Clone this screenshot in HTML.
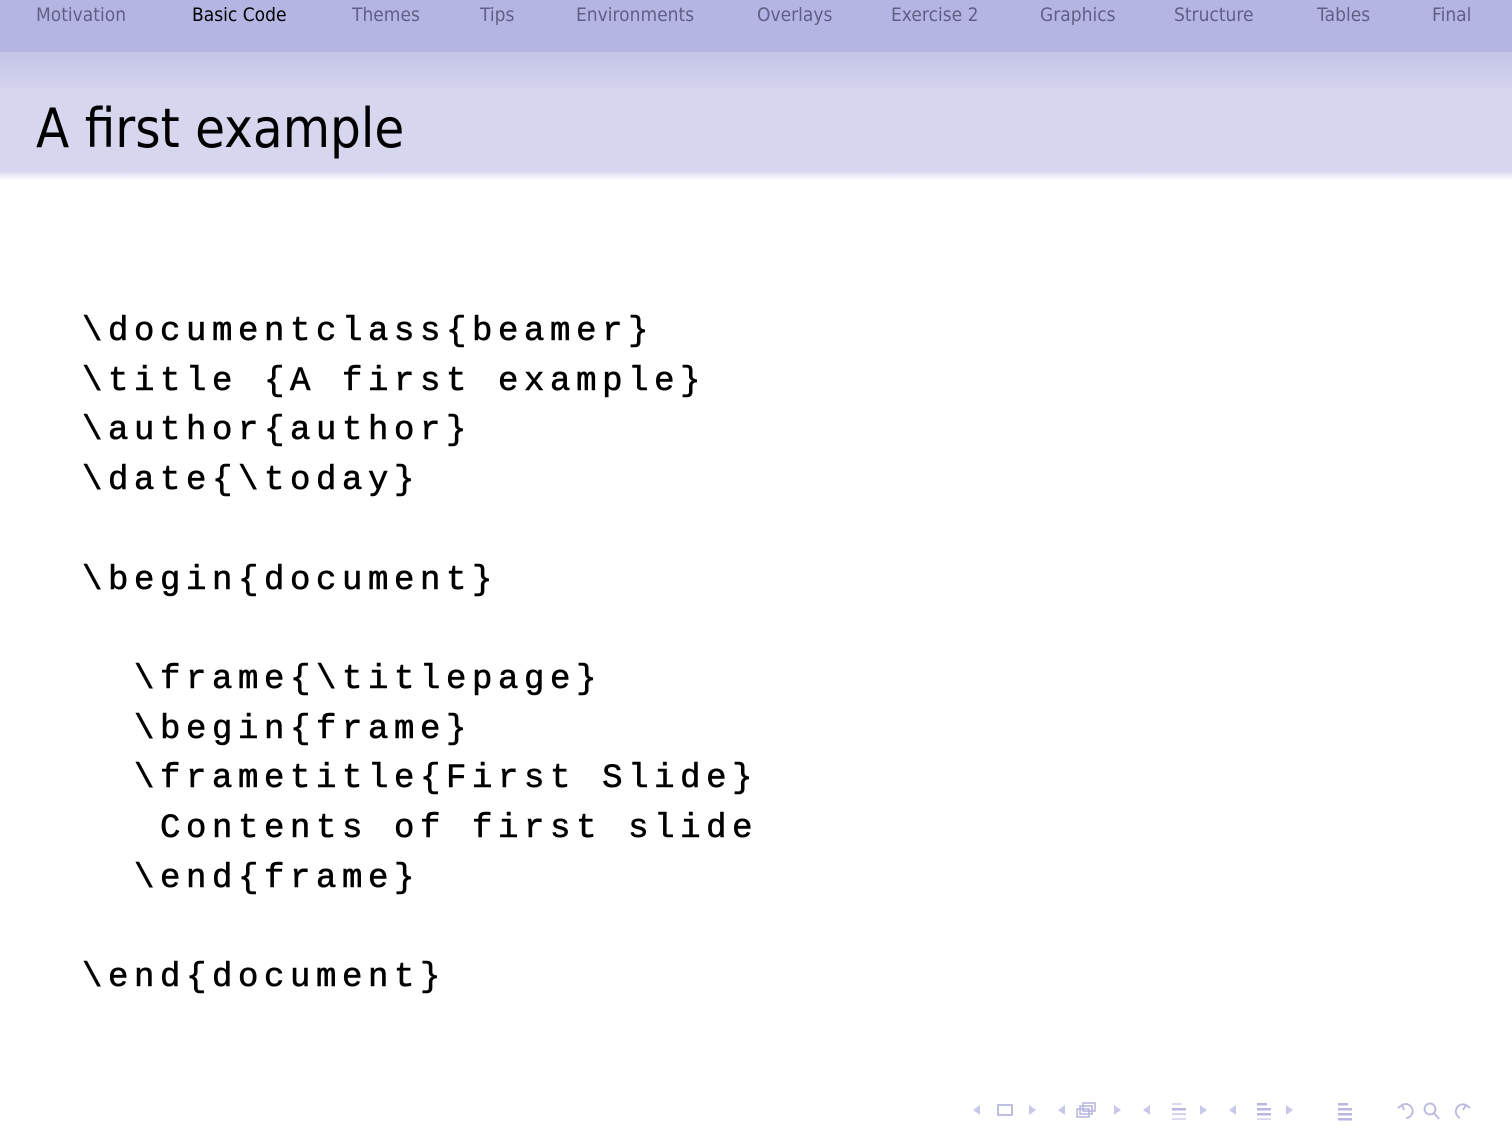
<!DOCTYPE html>
<html><head><meta charset="utf-8"><style>
body{margin:0;width:1512px;height:1134px;background:#fff;position:relative;overflow:hidden;font-family:"DejaVu Sans","Liberation Sans",sans-serif;}
.nav{position:absolute;left:0;top:0;width:1512px;height:52px;background:#b5b5e3;}
.grad{position:absolute;left:0;top:52px;width:1512px;height:36px;background:linear-gradient(#c4c4e8,#d3d3ee);}
.tb{position:absolute;left:0;top:88px;width:1512px;height:84px;background:#d6d6ef;}
.fade{position:absolute;left:0;top:172px;width:1512px;height:8px;background:linear-gradient(#dcdcf1,#fff);}
.n{position:absolute;top:3px;font-size:19px;color:#5f5f86;line-height:24px;transform:scaleX(0.9);transform-origin:left;}
.n.a{color:#000;}
.title{position:absolute;left:36px;top:93px;font-size:54px;line-height:72px;color:#000;transform:scaleX(0.9);transform-origin:left;}
.code{position:absolute;left:82px;top:308px;font-family:"Liberation Mono",monospace;font-size:34px;letter-spacing:5.6px;line-height:49.7px;white-space:pre;color:#000;margin:0;-webkit-text-stroke:0.6px #000;}
.icons{position:absolute;left:960px;top:1096px;}
</style></head><body>
<div class="nav"></div><div class="grad"></div><div class="tb"></div><div class="fade"></div>
<div class="n" style="left:36px">Motivation</div>
<div class="n a" style="left:192px">Basic Code</div>
<div class="n" style="left:352px">Themes</div>
<div class="n" style="left:480px">Tips</div>
<div class="n" style="left:576px">Environments</div>
<div class="n" style="left:757px">Overlays</div>
<div class="n" style="left:891px">Exercise 2</div>
<div class="n" style="left:1040px">Graphics</div>
<div class="n" style="left:1174px">Structure</div>
<div class="n" style="left:1317px">Tables</div>
<div class="n" style="left:1432px">Final</div>
<div class="title">A first example</div>
<pre class="code">\documentclass{beamer}
\title {A first example}
\author{author}
\date{\today}

\begin{document}

  \frame{\titlepage}
  \begin{frame}
  \frametitle{First Slide}
   Contents of first slide
  \end{frame}

\end{document}</pre>
<svg class="icons" width="552" height="30" viewBox="0 0 552 30" fill="#c8c8e8" stroke="none">
<polygon points="13,14 20,9 20,19"/>
<rect x="38" y="9" width="14" height="10" fill="none" stroke="#b8b8e0" stroke-width="1.8"/>
<polygon points="69,9 76,14 69,19"/>
<polygon points="98,14 105,9 105,19"/>
<g fill="none" stroke="#b8b8e0" stroke-width="1.6"><rect x="117" y="13" width="12" height="8"/><rect x="120" y="10" width="12" height="8"/><rect x="123" y="7" width="12" height="8"/></g>
<polygon points="154,9 161,14 154,19"/>
<polygon points="183,14 190,9 190,19"/>
<g fill="#b8b8e0"><rect x="212" y="7" width="10" height="2" opacity=".5"/><rect x="212" y="12" width="14" height="2.5"/><rect x="212" y="17" width="14" height="2" opacity=".6"/><rect x="212" y="22" width="14" height="2" opacity=".5"/></g>
<polygon points="240,9 247,14 240,19"/>
<polygon points="269,14 276,9 276,19"/>
<g fill="#b8b8e0"><rect x="297" y="7" width="10" height="2.5"/><rect x="297" y="12" width="14" height="2.5"/><rect x="297" y="17" width="14" height="2.5"/><rect x="297" y="22" width="14" height="2" opacity=".5"/></g>
<polygon points="326,9 333,14 326,19"/>
<g fill="#b8b8e0"><rect x="378" y="7" width="10" height="2.5"/><rect x="378" y="12" width="14" height="2.5"/><rect x="378" y="17" width="14" height="2.5"/><rect x="378" y="22" width="14" height="2.5"/></g>
<g fill="none" stroke="#b8b8e0" stroke-width="1.8"><path d="M442,9 A7,7 0 1 1 446,22"/><path d="M438,12 L442,9 L444,14"/><circle cx="470" cy="13" r="5.5"/><path d="M474,17 L479,23"/><path d="M506,9 A7,7 0 1 0 500,22"/><path d="M510,12 L506,9 L503,14"/></g>
</svg>
</body></html>
